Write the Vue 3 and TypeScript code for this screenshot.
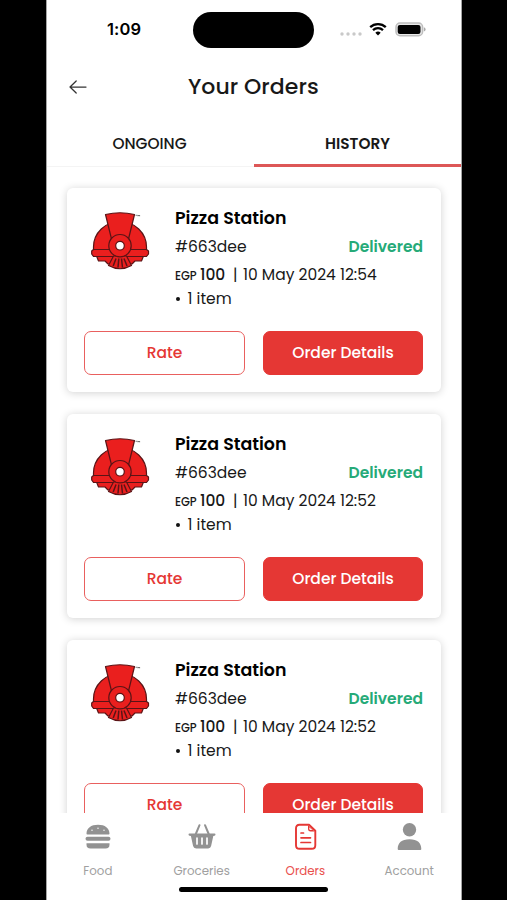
<script setup lang="ts">
interface Order {
  id: number
  store: string
  code: string
  status: string
  currency: string
  total: number
  placedAt: string
  items: string
}

const orders: Order[] = ['12:54', '12:52', '12:52'].map((time, index) => ({
  id: index,
  store: 'Pizza Station',
  code: '#663dee',
  status: 'Delivered',
  currency: 'EGP',
  total: 100,
  placedAt: `10 May 2024 ${time}`,
  items: '1 item',
}))
</script>

<template>
  <div class="stage">
    <main class="phone">
      <div class="status-bar">
        <span class="time">1:09</span>
        <span class="island"></span>
        <div class="indicators">
          <svg class="dots" width="22" height="4" viewBox="0 0 22 4">
            <circle cx="2" cy="2" r="1.7" /><circle cx="8" cy="2" r="1.7" /><circle cx="14" cy="2" r="1.7" /><circle cx="20" cy="2" r="1.7" />
          </svg>
          <svg class="wifi" width="18" height="14" viewBox="0 0 18 14">
            <path d="M1.2 5.2A11.3 11.3 0 0 1 16.8 5.2M4 8.2A7.3 7.3 0 0 1 14 8.2" fill="none" stroke="#000" stroke-width="2.3" />
            <path d="M9 13.4 6.3 10.7A3.9 3.9 0 0 1 11.7 10.7Z" />
          </svg>
          <svg class="battery" width="31" height="15" viewBox="0 0 31 15">
            <rect x="1" y="1.1" width="26.6" height="12.6" rx="4" fill="#e8e8e8" stroke="#bdbdbd" stroke-width="1.5" />
            <rect x="2.7" y="2.9" width="22.8" height="9" rx="2.2" />
            <path d="M28.9 5.200q1.700.6 1.700 2.200t-1.700 2.200z" fill="#aaa" />
          </svg>
        </div>
      </div>

      <header class="header">
        <svg class="back" width="18" height="14" viewBox="0 0 18 14">
          <path d="M17 7H1M7.200 1 1 7l6.200 6" fill="none" stroke="#333" stroke-width="1.250" stroke-linecap="round" stroke-linejoin="round" />
        </svg>
        <h1>Your Orders</h1>
      </header>

      <nav class="tabs">
        <button class="tab ongoing"><span>ONGOING</span></button>
        <button class="tab history"><span>HISTORY</span></button>
      </nav>

      <section class="list">
        <article v-for="order in orders" :key="order.id" class="card">
          <div class="summary">
            <svg class="logo" width="60" height="60" viewBox="0 0 60 60">
              <g fill="#ea1f1e" stroke="#5a1416" stroke-width="1.200" stroke-linejoin="round">
                <path d="M3.500 40V37A26.500 25.500 0 0 1 56.500 37V40Z" />
                <path d="M6.500 46H53.500L51.500 51H45L42 54H18L15 51H8.500Z" />
                <path d="M3.500 39.500H56.500L58.500 41V44L56.500 46.500H3.500L1.700 44V41Z" />
                <path d="M23.500 46 18.500 55.500Q30 62 41.500 55.500L36.500 46Z" />
                <path d="M15.500 4.500Q30 1 44.500 4.500L38.500 29Q30 22 21.500 29Z" />
                <circle cx="30" cy="35.700" r="11.200" />
                <circle cx="30" cy="35.700" r="4.300" fill="#fff" />
              </g>
              <path d="M26 48.500 23.200 56M28.800 48.500 28 57.500M31.500 48.500 32.500 57.500M34 48.500 37 56" fill="none" stroke="#5a1416" stroke-width="1.500" />
              <path d="M45.500 5.300h2M48 6.300V5l.8 1 .8-1v1.300" fill="none" stroke="#555" stroke-width=".7" />
            </svg>
            <div class="info">
              <h2>{{ order.store }}</h2>
              <div class="row">
                <span class="code">{{ order.code }}</span>
                <span class="status">{{ order.status }}</span>
              </div>
              <div class="meta">
                <span class="currency">{{ order.currency }}</span>
                <span class="total">{{ order.total }}</span>
                <span class="bar">|</span>
                <span class="date">{{ order.placedAt }}</span>
              </div>
              <div class="items"><i></i><span>{{ order.items }}</span></div>
            </div>
          </div>
          <div class="actions">
            <button class="btn rate">Rate</button>
            <button class="btn details">Order Details</button>
          </div>
        </article>
      </section>

      <footer class="bottom">
        <nav class="bottom-nav">
          <a class="nav-item food">
            <svg width="30" height="30" viewBox="0 0 30 30">
              <path d="M3.500 12.800C3.500 7 8 3.700 15 3.700s11.500 3.300 11.500 9.100q0 .7-.8.700H4.300q-.8 0-.8-.7Z" />
              <rect x="2.500" y="15.800" width="25" height="4" rx="2" />
              <path d="M3.500 22.200h23v1.500q0 3.800-4 3.800h-15q-4 0-4-3.800Z" />
              <g fill="#fff"><circle cx="9" cy="9.300" r=".7" /><circle cx="15" cy="7.200" r=".7" /><circle cx="21" cy="9.300" r=".7" /></g>
            </svg>
            <span>Food</span>
          </a>
          <a class="nav-item groceries">
            <svg width="30" height="30" viewBox="0 0 30 30">
              <path d="M12.500 4.200 8.800 13M18 4.200l3.700 8.800" fill="none" stroke="#929292" stroke-width="2" stroke-linecap="round" />
              <path d="M2.500 12.500h25q1 0 1 1t-1 1.300l-1.200.3-2.200 10q-.5 2.300-3 2.300H9.100q-2.500 0-3-2.300L3.900 15.100l-1.400-.3q-1-.3-1-1.300t1-1Z" />
              <path d="M10 17v6M15 17v6M20 17v6" stroke="#fff" stroke-width="1.700" stroke-linecap="round" />
            </svg>
            <span>Groceries</span>
          </a>
          <a class="nav-item orders">
            <svg width="30" height="30" viewBox="0 0 30 30">
              <path d="M19 3.800H9.500Q6 3.800 6 7.300v16.900Q6 27.800 9.500 27.800h12.300q3.500 0 3.500-3.600V9.800Z" fill="#fff" stroke="#e53734" stroke-width="1.900" stroke-linejoin="round" />
              <path d="M18 4.300V7.800q0 2.600 2.600 2.600h4.200ZM19.300 6.300V7.800q0 1.300 1.300 1.300h1.800Z" fill-rule="evenodd" />
              <path d="M11 12h2.500M11 16.800h9.500M11 21.500h9.500" stroke="#e53734" stroke-width="1.700" stroke-linecap="round" />
            </svg>
            <span>Orders</span>
          </a>
          <a class="nav-item account">
            <svg width="30" height="30" viewBox="0 0 30 30">
              <circle cx="15.500" cy="8.700" r="6.700" />
              <path d="M3.700 28C3.700 22 7.500 18.300 15.500 18.300S27.300 22 27.300 28q0 1-1 1H4.700q-1 0-1-1Z" />
            </svg>
            <span>Account</span>
          </a>
        </nav>
        <div class="home-indicator"></div>
      </footer>
    </main>
  </div>
</template>

<style>
body {
  margin: 0;
  background: #000;
}
</style>

<style scoped>
.stage {
  display: flex;
  justify-content: center;
  width: 507px;
  height: 900px;
  background: #000;
  font-family: Poppins, Inter, "Open Sans", sans-serif;
  color: #181818;
}
.phone {
  display: flex;
  flex-direction: column;
  box-sizing: border-box;
  width: 416px;
  height: 900px;
  margin-left: 1px;
  border: solid #a5a5a5;
  border-width: 0 1px;
  background: #fff;
  overflow: hidden;
}
button {
  padding: 0;
  border: 0;
  background: none;
  color: inherit;
  font: inherit;
}
h1, h2 {
  margin: 0;
}
span {
  white-space: nowrap;
}
.status-bar {
  display: flex;
  flex: none;
  align-items: center;
  height: 59px;
}
.time {
  width: 86px;
  padding: 0 0 1px 60px;
  font: 600 16.5px/20px Inter, sans-serif;
  letter-spacing: 0.1px;
  color: #000;
}
.island {
  width: 121px;
  height: 36px;
  border-radius: 18px;
  background: #000;
}
.indicators {
  display: flex;
  align-items: center;
  padding: 0 0 1px 26px;
}
.dots {
  margin-top: 9px;
  fill: #c9c9c9;
}
.wifi {
  margin-left: 7px;
}
.battery {
  margin-left: 8px;
}
.header {
  display: flex;
  flex: none;
  align-items: center;
  height: 56px;
  padding-left: 22px;
}
.back {
  width: 18px;
}
h1 {
  padding: 0 0 1px 101px;
  font-size: 22px;
  font-weight: 500;
  letter-spacing: 0.05px;
}
.tabs {
  display: flex;
  flex: none;
  height: 52px;
}
.tab {
  box-sizing: border-box;
  width: 207px;
  height: 52px;
  padding-top: 7px;
  padding-right: 2px;
  border-bottom: 1px solid #f4f4f4;
  font-size: 15.4px;
  font-weight: 500;
  line-height: 40px;
}
.tab.history {
  padding-top: 8px;
  padding-right: 0;
  border-bottom: 3px solid #dd5757;
  font-size: 15.3px;
  font-weight: 600;
}
.list {
  flex: 1;
  min-height: 0;
  padding: 21px 20px 0;
  overflow: hidden;
}
.card {
  box-sizing: border-box;
  height: 204px;
  margin-bottom: 22px;
  padding: 18px 18px 17px;
  border-radius: 6px;
  background: #fff;
  box-shadow: 0 1px 8px rgba(0, 0, 0, 0.18);
}
.summary {
  display: flex;
  height: 125px;
}
.logo {
  flex: none;
  margin: 4px 25px 0 5px;
}
.info {
  flex: 1;
  min-width: 0;
  font-size: 15.5px;
}
h2 {
  height: 24px;
  color: #000;
  font-size: 17.4px;
  font-weight: 600;
  line-height: 24px;
}
.row {
  display: flex;
  justify-content: space-between;
  padding-top: 5px;
  line-height: 24px;
}
.status {
  color: #26aa78;
  font-weight: 600;
}
.meta {
  display: flex;
  align-items: baseline;
  padding-top: 4px;
  line-height: 24px;
}
.currency {
  width: 25px;
  font-size: 11.5px;
  font-weight: 500;
  letter-spacing: -0.1px;
}
.total {
  width: 33px;
  font-weight: 500;
}
.bar {
  width: 10px;
}
.items {
  display: flex;
  align-items: center;
  margin-top: -1px;
  line-height: 24px;
}
.items i {
  width: 4px;
  height: 4px;
  margin: 0 7.5px 0 1px;
  border-radius: 50%;
  background: #111;
}
.actions {
  display: flex;
  justify-content: space-between;
}
.btn {
  box-sizing: border-box;
  width: 160px;
  height: 44px;
  padding-bottom: 1px;
  border: 1.5px solid #e9605e;
  border-radius: 7px;
  font-size: 15.5px;
  font-weight: 500;
}
.rate {
  width: 161px;
  margin-left: -1px;
  color: #e53734;
}
.details {
  border-color: #e53734;
  background: #e53734;
  color: #fff;
}
.bottom {
  flex: none;
  height: 87px;
  background: #fff;
}
.bottom-nav {
  display: flex;
  box-sizing: border-box;
  height: 74px;
  margin-left: -1px;
  padding-top: 8px;
}
.nav-item {
  display: flex;
  flex: 1;
  flex-direction: column;
  align-items: center;
  color: #a0a0a0;
  fill: #929292;
  font-size: 11.8px;
  line-height: 16px;
}
.nav-item svg {
  flex: none;
}
.nav-item span {
  padding-top: 12px;
}
.nav-item.orders {
  color: #e9504d;
  fill: #e53734;
}
.home-indicator {
  width: 149px;
  height: 5px;
  margin: 0 auto 0 132px;
  border-radius: 3px;
  background: #000;
}
</style>
